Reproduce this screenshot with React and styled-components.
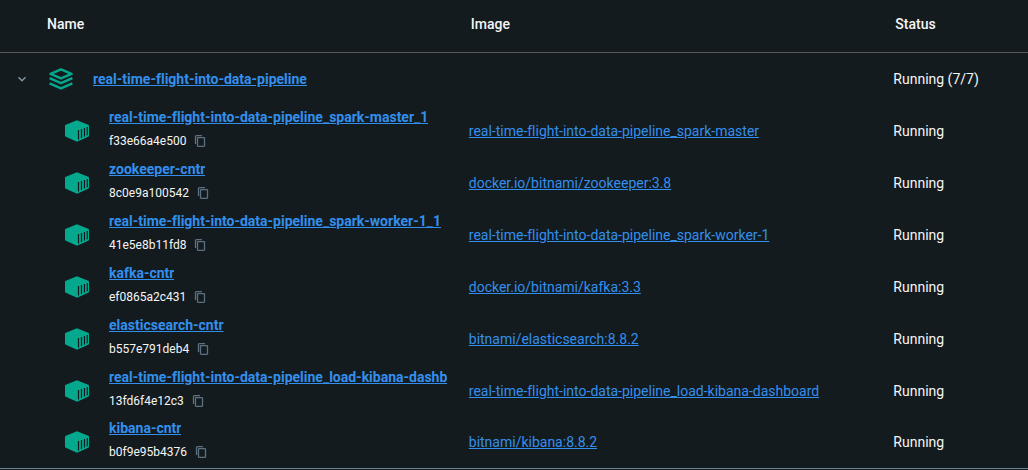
import React, { useState } from "react";
import styled, { createGlobalStyle } from "styled-components";

const GlobalStyle = createGlobalStyle`
  * { box-sizing: border-box; }
  body {
    margin: 0;
    background: #141b1e;
    color: #f4f6f7;
    font-family: Roboto, "Liberation Sans", sans-serif;
    font-size: 14px;
    line-height: 20px;
    font-variant-ligatures: none;
  }
`;

const Table = styled.table`
  width: 100%;
  table-layout: fixed;
  border-collapse: separate;
  border-spacing: 0;
`;

const Col = styled.col`
  width: ${(p) => p.$width};
`;

const HeadCell = styled.th`
  height: 53px;
  padding: 0 0 4px ${(p) => p.$indent || 2}px;
  border-bottom: 1px solid #5a5a5a;
  text-align: left;
  font-weight: 500;
`;

const Cell = styled.td`
  height: 52px;
  padding: 0;
  white-space: nowrap;
`;

const Row = styled.tr`
  &:last-child > ${Cell} {
    padding-bottom: 1px;
    border-bottom: 1px solid #6b8296;
  }
`;

const NameLayout = styled.div`
  display: flex;
  align-items: center;
  padding-left: ${(p) => (p.$nested ? 65 : 14)}px;
  padding-right: 8px;
`;

const IconSlot = styled.span`
  display: flex;
  flex: none;
  width: 24px;
  margin-right: 20px;
  margin-left: ${(p) => (p.$nested ? 0 : 19)}px;
`;

const NameStack = styled.div`
  display: flex;
  flex-direction: column;
  align-items: flex-start;
  gap: 4px;
  min-width: 0;
  padding-bottom: 4px;
`;

const Link = styled.a`
  max-width: 100%;
  overflow: hidden;
  color: #338fed;
  font-weight: ${(p) => (p.$strong ? 700 : 400)};
  text-decoration: underline;
`;

const IdLine = styled.div`
  display: flex;
  align-items: center;
  gap: 8px;
  font-size: 12px;
`;

const IconButton = styled.button`
  display: flex;
  flex: none;
  padding: 0;
  border: 0;
  background: none;
  color: ${(p) => p.$color || "#5b7080"};
  cursor: pointer;
`;

const Chevron = () => (
  <svg width="16" height="16" viewBox="0 0 16 16" fill="none" stroke="currentColor" strokeWidth="1.4" aria-hidden="true">
    <path d="M4.5 6.2 8 9.7l3.500-3.500" />
  </svg>
);

const StackIcon = () => (
  <svg width="24" height="24" viewBox="0 0 24 24" fill="none" stroke="#03a88d" strokeWidth="2.5" strokeLinejoin="round" aria-hidden="true">
    <path d="M12 2.400 22.500 6.900 12 11.400 1.500 6.900Z" />
    <path d="M0.600 11.200 12 16.200l11.400-5M0.600 16.300 12 21.400l11.400-5.100" />
  </svg>
);

const ContainerIcon = () => (
  <svg width="24" height="24" viewBox="0 0 24 24" aria-hidden="true">
    <path fill="#03a88d" d="M12 1.200 23.200 5.700Q24 6 24 6.900V16.400Q24 17.300 23.200 17.700L12 22.800.800 17.700Q0 17.300 0 16.400V6.900Q0 6 .800 5.700Z" />
    <path fill="none" stroke="#141b1e" strokeWidth="1.200" d="M13.500 11v9.500M16.500 10v8.900M19.500 9v8.500M22.300 8v8.200" />
  </svg>
);

const CopyIcon = () => (
  <svg width="12" height="12" viewBox="0 0 12 12" fill="none" stroke="currentColor" strokeWidth="1.3" aria-hidden="true">
    <path d="M1.500 9V1.500Q1.500.700 2.500.700H8" />
    <rect x="3.500" y="2.700" width="7" height="8.600" rx=".5" />
  </svg>
);

const containers = [
  { name: "real-time-flight-into-data-pipeline_spark-master_1", id: "f33e66a4e500", image: "real-time-flight-into-data-pipeline_spark-master" },
  { name: "zookeeper-cntr", id: "8c0e9a100542", image: "docker.io/bitnami/zookeeper:3.8" },
  { name: "real-time-flight-into-data-pipeline_spark-worker-1_1", id: "41e5e8b11fd8", image: "real-time-flight-into-data-pipeline_spark-worker-1" },
  { name: "kafka-cntr", id: "ef0865a2c431", image: "docker.io/bitnami/kafka:3.3" },
  { name: "elasticsearch-cntr", id: "b557e791deb4", image: "bitnami/elasticsearch:8.8.2" },
  { name: "real-time-flight-into-data-pipeline_load-kibana-dashb", id: "13fd6f4e12c3", image: "real-time-flight-into-data-pipeline_load-kibana-dashboard" },
  { name: "kibana-cntr", id: "b0f9e95b4376", image: "bitnami/kibana:8.8.2" },
];

function ContainerRow({ name, id, image }) {
  return (
    <Row>
      <Cell>
        <NameLayout $nested>
          <IconSlot $nested><ContainerIcon /></IconSlot>
          <NameStack>
            <Link $strong href="#">{name}</Link>
            <IdLine>
              <span>{id}</span>
              <IconButton type="button" aria-label={`Copy ${id}`} onClick={() => navigator.clipboard?.writeText(id)}>
                <CopyIcon />
              </IconButton>
            </IdLine>
          </NameStack>
        </NameLayout>
      </Cell>
      <Cell><Link href="#">{image}</Link></Cell>
      <Cell>Running</Cell>
    </Row>
  );
}

export default function App() {
  const [open, setOpen] = useState(true);
  return (
    <>
      <GlobalStyle />
      <Table>
        <colgroup>
          <Col $width="45.6%" />
          <Col $width="41.3%" />
          <Col />
        </colgroup>
        <thead>
          <tr>
            <HeadCell $indent={47} scope="col">Name</HeadCell>
            <HeadCell scope="col">Image</HeadCell>
            <HeadCell scope="col">Status</HeadCell>
          </tr>
        </thead>
        <tbody>
          <Row>
            <Cell>
              <NameLayout>
                <IconButton type="button" $color="#8398a8" aria-label="Toggle containers" aria-expanded={open} onClick={() => setOpen(!open)}>
                  <Chevron />
                </IconButton>
                <IconSlot><StackIcon /></IconSlot>
                <Link $strong href="#">real-time-flight-into-data-pipeline</Link>
              </NameLayout>
            </Cell>
            <Cell />
            <Cell>Running (7/7)</Cell>
          </Row>
          {open && containers.map((c) => <ContainerRow key={c.id} {...c} />)}
        </tbody>
      </Table>
    </>
  );
}
